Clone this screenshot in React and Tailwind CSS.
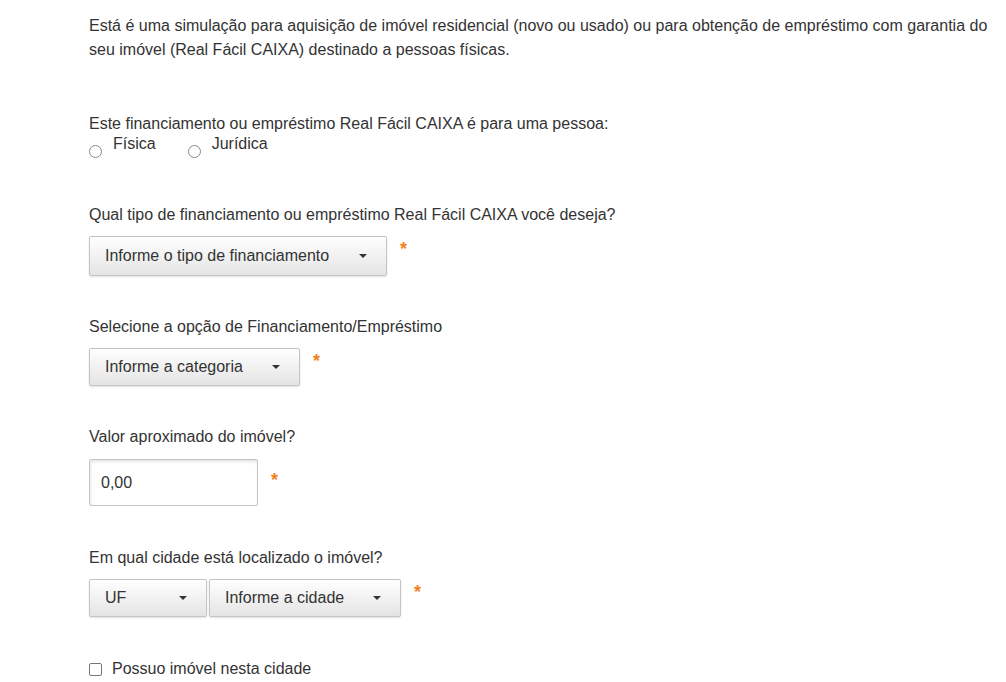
import React from 'react';

const Caret = () => (
  <span className="inline-block w-0 h-0 border-l-[4px] border-r-[4px] border-t-[4px] border-l-transparent border-r-transparent border-t-[#333]" />
);

const Star = ({ className = '' }) => (
  <span className={`text-[#f0821e] text-[18px] leading-none font-bold ${className}`}>*</span>
);

const SelectButton = ({ label, width, height = 'h-[38px]' }) => (
  <div
    className={`${width} ${height} flex items-center justify-between pl-[15px] pr-[19px] border border-[#c4c4c4] rounded-[2px] bg-gradient-to-b from-white to-[#e4e4e4] shadow-[0_1px_2px_rgba(0,0,0,0.12)] text-[#333]`}
  >
    <span>{label}</span>
    <Caret />
  </div>
);

const Radio = ({ label }) => (
  <label className="flex items-start gap-[11px]">
    <span className="mt-[11px] w-[13px] h-[13px] rounded-full border border-[#8a8a8a] bg-white" />
    <span>{label}</span>
  </label>
);

const App = () => {
  return (
    <div
      className="min-h-screen bg-white text-[#333] text-[16px] pl-[89px] pr-[14px]"
      style={{ fontFamily: '"Liberation Sans", Arial, sans-serif' }}
    >
      {/* Intro */}
      <p className="pt-[14px] leading-[24px]">
        Está é uma simulação para aquisição de imóvel residencial (novo ou usado) ou para obtenção de empréstimo com garantia do seu imóvel (Real Fácil CAIXA) destinado a pessoas físicas.
      </p>

      {/* Tipo de pessoa */}
      <div className="mt-[52px] leading-[20px]">
        Este financiamento ou empréstimo Real Fácil CAIXA é para uma pessoa:
      </div>
      <div className="flex gap-[32px] leading-[20px] h-[20px]">
        <Radio label="Física" />
        <Radio label="Jurídica" />
      </div>

      {/* Tipo de financiamento */}
      <div className="mt-[51px] leading-[20px]">
        Qual tipo de financiamento ou empréstimo Real Fácil CAIXA você deseja?
      </div>
      <div className="mt-[11px] flex items-start gap-[13px]">
        <SelectButton label="Informe o tipo de financiamento" width="w-[298px]" height="h-[40px]" />
        <Star className="mt-[4px]" />
      </div>

      {/* Categoria */}
      <div className="mt-[41px] leading-[20px]">
        Selecione a opção de Financiamento/Empréstimo
      </div>
      <div className="mt-[11px] flex items-start gap-[13px]">
        <SelectButton label="Informe a categoria" width="w-[211px]" />
        <Star className="mt-[4px]" />
      </div>

      {/* Valor */}
      <div className="mt-[41px] leading-[20px]">Valor aproximado do imóvel?</div>
      <div className="mt-[12px] flex items-start gap-[13px]">
        <input
          type="text"
          defaultValue="0,00"
          className="w-[169px] h-[47px] px-[11px] border border-[#c4c4c4] rounded-[2px] bg-white text-[#333] text-[16px] shadow-[inset_1px_2px_3px_rgba(0,0,0,0.1)] outline-none"
        />
        <Star className="mt-[12px]" />
      </div>

      {/* Cidade */}
      <div className="mt-[42px] leading-[20px]">Em qual cidade está localizado o imóvel?</div>
      <div className="mt-[11px] flex items-start">
        <SelectButton label="UF" width="w-[118px]" />
        <div className="ml-[2px]">
          <SelectButton label="Informe a cidade" width="w-[192px]" />
        </div>
        <Star className="ml-[13px] mt-[4px]" />
      </div>

      {/* Checkbox */}
      <label className="mt-[42px] flex items-center gap-[10px] leading-[20px]">
        <span className="w-[13px] h-[13px] rounded-[2px] border border-[#767676] bg-white" />
        <span>Possuo imóvel nesta cidade</span>
      </label>
    </div>
  );
};

export default App;
